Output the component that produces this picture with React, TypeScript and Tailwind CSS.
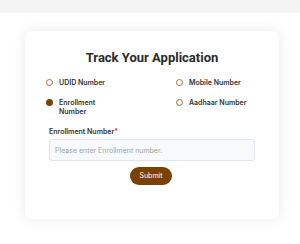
import { useState } from "react";

const options = [
  { id: "udid", label: "UDID Number" },
  { id: "mobile", label: "Mobile Number" },
  { id: "enrollment", label: "Enrollment Number" },
  { id: "aadhaar", label: "Aadhaar Number" },
];

function Radio({ checked }: { checked: boolean }) {
  return (
    <span
      className={
        checked
          ? "mt-[1px] h-[7px] w-[7px] shrink-0 rounded-full bg-[#7a4100]"
          : "mt-[1px] h-[7px] w-[7px] shrink-0 rounded-full border border-[#a2713f] bg-white"
      }
    />
  );
}

export default function App() {
  const [selected, setSelected] = useState("enrollment");

  return (
    <div className="h-[244px] w-[300px] overflow-hidden bg-white" style={{ fontFamily: "Inter, sans-serif" }}>
      <div className="h-[13px] bg-[#f4f4f4]" />
      <div className="ml-[25px] mt-[18px] h-[188px] w-[254px] rounded-[7px] bg-white pt-[18px] shadow-[0_0_14px_rgba(0,0,0,0.09)]">
        <h2
          className="text-center text-[13px] font-bold leading-[18px] text-[#2b2b2b]"
          style={{ fontFamily: "Roboto, sans-serif" }}
        >
          Track Your Application
        </h2>

        <div className="mt-[11px] grid grid-cols-[130px_1fr] gap-y-[11px] pl-[21px]">
          {options.map((o) => (
            <button
              key={o.id}
              type="button"
              onClick={() => setSelected(o.id)}
              className="flex items-start gap-[6px] text-left"
            >
              <Radio checked={selected === o.id} />
              <span className="max-w-[55px] whitespace-normal text-[7px] font-semibold leading-[9px] text-[#333333]">
                {o.id === "mobile" || o.id === "aadhaar" ? (
                  <span className="whitespace-nowrap">{o.label}</span>
                ) : (
                  o.label
                )}
              </span>
            </button>
          ))}
        </div>

        <div className="mt-[11px] px-[24px]">
          <label className="block text-[7px] font-semibold leading-[9px] text-[#333333]">
            Enrollment Number<span className="text-[#e02424]">*</span>
          </label>
          <input
            placeholder="Please enter Enrollment number."
            className="mt-[3px] block h-[22px] w-[206px] rounded-[3px] border border-[#e2e6f1] bg-[#f8f9fc] px-[5px] text-[7px] text-[#555] outline-none placeholder:text-[#a3a3a3]"
          />
          <div className="mt-[6px] flex justify-center pr-[2px]">
            <button
              type="button"
              className="h-[18px] w-[42px] rounded-full bg-[#7a4100] text-[7px] font-normal text-white"
            >
              Submit
            </button>
          </div>
        </div>
      </div>
    </div>
  );
}
